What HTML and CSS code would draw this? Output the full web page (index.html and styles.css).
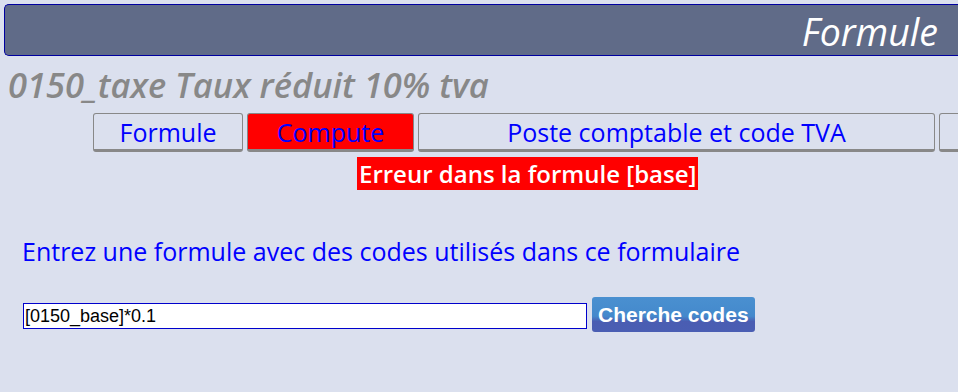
FILE: index.html
```html
<!DOCTYPE html>
<html lang="fr">
<head>
    <meta charset="UTF-8">
    <title>Formule</title>
    <link rel="stylesheet" href="styles.css">
</head>
<body>
    <div class="header">
        <span class="header-title">Formule</span>
    </div>
    <h1 class="title">0150_taxe Taux réduit 10% tva</h1>
    <div class="tabs">
        <button class="tab tab-formule">Formule</button>
        <button class="tab tab-compute active">Compute</button>
        <button class="tab tab-poste">Poste comptable et code TVA</button>
        <button class="tab tab-more"></button>
    </div>
    <div class="error-row">
        <span class="error">Erreur dans la formule [base]</span>
    </div>
    <p class="hint">Entrez une formule avec des codes utilisés dans ce formulaire</p>
    <div class="search">
        <input type="text" class="formula" value="[0150_base]*0.1">
        <button class="search-btn">Cherche codes</button>
    </div>
</body>
</html>
```

FILE: styles.css
```css
html, body {
    margin: 0;
    overflow: hidden;
}

body {
    background-color: #dbe0ee;
    font-family: "Open Sans", sans-serif;
    width: 958px;
    height: 392px;
    padding: 4px 0 0 4px;
    box-sizing: border-box;
}

.header {
    height: 50px;
    background-color: #606b88;
    border: 1px solid #0000a0;
    border-right: none;
    border-radius: 5px 0 0 5px;
    display: flex;
    justify-content: flex-end;
    align-items: center;
    padding-right: 20px;
}

.header-title {
    color: white;
    font-style: italic;
    font-size: 37.5px;
    line-height: 44px;
    margin-top: 4px;
}

.title {
    margin: 6px 0 0 4px;
    color: #888;
    font-style: italic;
    font-weight: 600;
    font-size: 34.5px;
    line-height: 46px;
    white-space: nowrap;
}

.tabs {
    display: flex;
    gap: 4px;
    margin: 5px 0 0 89px;
    white-space: nowrap;
}

.tab {
    flex: none;
    height: 39px;
    padding: 0;
    border: 1px solid #888;
    border-bottom: 3px solid #888;
    border-radius: 3px;
    background-color: #dbe0ee;
    color: #0000ff;
    font-family: "Open Sans", sans-serif;
    font-size: 25px;
    line-height: 34px;
}

.tab.active {
    background-color: #ff0000;
}

.tab-formule { width: 150px; }
.tab-compute { width: 167px; }
.tab-poste { width: 517px; }
.tab-more { width: 40px; }

.error-row {
    margin: 5px 0 0 353px;
}

.error {
    display: inline-block;
    background-color: #ff0000;
    color: white;
    font-weight: 600;
    font-size: 24px;
    line-height: 33px;
    padding: 0 2px;
}

.hint {
    margin: 44px 0 0 18px;
    color: #0000ff;
    font-size: 25px;
    line-height: 34px;
}

.search {
    display: flex;
    align-items: flex-start;
    margin: 29px 0 0 19px;
    gap: 5px;
}

.formula {
    width: 564px;
    height: 26px;
    margin-top: 6px;
    box-sizing: border-box;
    border: 1px solid #0000cc;
    padding: 0 1px;
    font-family: "Liberation Sans", Arial, sans-serif;
    font-size: 18px;
    color: black;
    background: white;
    outline: none;
}

.search-btn {
    height: 35px;
    padding: 0 6px;
    border: none;
    border-radius: 3px;
    background: linear-gradient(#4a90d0 0%, #4489cc 55%, #4a5db2 70%, #4a5eb3 100%);
    color: white;
    font-family: "Liberation Sans", Arial, sans-serif;
    font-weight: bold;
    font-size: 21px;
}
```
